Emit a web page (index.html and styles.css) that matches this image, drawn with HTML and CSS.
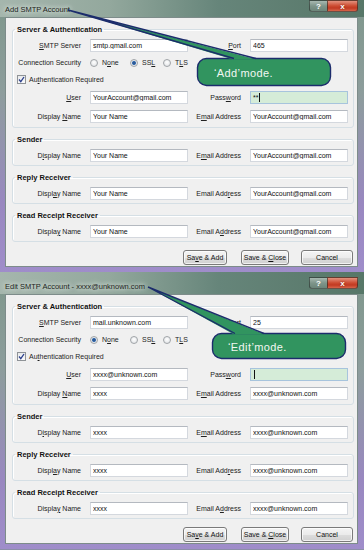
FILE: index.html
```html
<!DOCTYPE html>
<html lang="en">
<head>
  <meta charset="UTF-8">
  <title>SMTP Account</title>
  <link rel="stylesheet" href="styles.css">
</head>
<body>
  <!-- Add mode -->
  <section class="window first">
    <div class="titlebar">
      <span class="title">Add SMTP Account</span>
      <div class="caption">
        <span class="cap-help">?</span>
        <span class="cap-close">x</span>
      </div>
    </div>
    <div class="client">
      <fieldset class="group main">
        <legend>Server &amp; Authentication</legend>
        <div class="row">
          <label class="lbl"><u>S</u>MTP Server</label>
          <input class="txt" value="smtp.gmail.com">
          <label class="lbl lbl-r"><u>P</u>ort</label>
          <input class="txt" value="465">
        </div>
        <div class="row">
          <span class="lbl">Connection Security</span>
          <label class="opt opt-none"><span class="radio"></span><span>N<u>o</u>ne</span></label>
          <label class="opt opt-ssl"><span class="radio on"></span><span>SS<u>L</u></span></label>
          <label class="opt"><span class="radio"></span><span>T<u>L</u>S</span></label>
        </div>
        <div class="row">
          <label class="check-opt"><span class="check"><svg viewBox="0 0 9 9" width="9" height="9"><path d="M2 4.5 L3.8 6.6 L7 2" fill="none" stroke="#2b3f8c" stroke-width="1.3"/></svg></span><span>Au<u>t</u>hentication Required</span></label>
        </div>
        <div class="row tall">
          <label class="lbl"><u>U</u>ser</label>
          <input class="txt" value="YourAccount@gmail.com">
          <label class="lbl lbl-r">Pass<u>w</u>ord</label>
          <span class="txt pw">**<span class="caret"></span></span>
        </div>
        <div class="row tall">
          <label class="lbl">Display <u>N</u>ame</label>
          <input class="txt" value="Your Name">
          <label class="lbl lbl-r">E<u>m</u>ail Address</label>
          <input class="txt" value="YourAccount@gmail.com">
        </div>
      </fieldset>

      <fieldset class="group">
        <legend>Sender</legend>
        <div class="row">
          <label class="lbl">D<u>i</u>splay Name</label>
          <input class="txt" value="Your Name">
          <label class="lbl lbl-r">E<u>m</u>ail Address</label>
          <input class="txt" value="YourAccount@gmail.com">
        </div>
      </fieldset>

      <fieldset class="group">
        <legend>Reply Receiver</legend>
        <div class="row">
          <label class="lbl">Displ<u>a</u>y Name</label>
          <input class="txt" value="Your Name">
          <label class="lbl lbl-r">Email Add<u>r</u>ess</label>
          <input class="txt" value="YourAccount@gmail.com">
        </div>
      </fieldset>

      <fieldset class="group">
        <legend>Read Receipt Receiver</legend>
        <div class="row">
          <label class="lbl">Displa<u>y</u> Name</label>
          <input class="txt" value="Your Name">
          <label class="lbl lbl-r">Email A<u>d</u>dress</label>
          <input class="txt" value="YourAccount@gmail.com">
        </div>
      </fieldset>

      <div class="actions">
        <button class="btn btn-add">Sa<u>v</u>e &amp; Add</button>
        <button class="btn btn-close">Save &amp; <u>C</u>lose</button>
        <button class="btn btn-cancel">Cancel</button>
      </div>
    </div>

    <svg class="callout" width="364" height="277" viewBox="0 0 364 277">
      <rect x="197.5" y="63.5" width="133" height="27" rx="9" fill="#31945f" stroke="#1c2c6c" stroke-width="1.4"/>
      <path d="M68 15 L257 64.5 L233 64.5 Z" fill="#31945f"/>
      <path d="M68 15 L256 63.5 M68 15 L234 63.5" stroke="#1c2c6c" stroke-width="1.4" fill="none"/>
      <text x="214" y="81.5" class="callout-text">‘Add’mode.</text>
    </svg>
  </section>

  <!-- Edit mode -->
  <section class="window second">
    <div class="titlebar">
      <span class="title">Edit SMTP Account - xxxx@unknown.com</span>
      <div class="caption">
        <span class="cap-help">?</span>
        <span class="cap-close">x</span>
      </div>
    </div>
    <div class="client">
      <fieldset class="group main">
        <legend>Server &amp; Authentication</legend>
        <div class="row">
          <label class="lbl"><u>S</u>MTP Server</label>
          <input class="txt" value="mail.unknown.com">
          <label class="lbl lbl-r"><u>P</u>ort</label>
          <input class="txt" value="25">
        </div>
        <div class="row">
          <span class="lbl">Connection Security</span>
          <label class="opt opt-none"><span class="radio on"></span><span>N<u>o</u>ne</span></label>
          <label class="opt opt-ssl"><span class="radio"></span><span>SS<u>L</u></span></label>
          <label class="opt"><span class="radio"></span><span>T<u>L</u>S</span></label>
        </div>
        <div class="row">
          <label class="check-opt"><span class="check"><svg viewBox="0 0 9 9" width="9" height="9"><path d="M2 4.5 L3.8 6.6 L7 2" fill="none" stroke="#2b3f8c" stroke-width="1.3"/></svg></span><span>Au<u>t</u>hentication Required</span></label>
        </div>
        <div class="row tall">
          <label class="lbl"><u>U</u>ser</label>
          <input class="txt" value="xxxx@unknown.com">
          <label class="lbl lbl-r">Pass<u>w</u>ord</label>
          <span class="txt pw"><span class="caret"></span></span>
        </div>
        <div class="row tall">
          <label class="lbl">Display <u>N</u>ame</label>
          <input class="txt" value="xxxx">
          <label class="lbl lbl-r">E<u>m</u>ail Address</label>
          <input class="txt" value="xxxx@unknown.com">
        </div>
      </fieldset>

      <fieldset class="group">
        <legend>Sender</legend>
        <div class="row">
          <label class="lbl">D<u>i</u>splay Name</label>
          <input class="txt" value="xxxx">
          <label class="lbl lbl-r">E<u>m</u>ail Address</label>
          <input class="txt" value="xxxx@unknown.com">
        </div>
      </fieldset>

      <fieldset class="group">
        <legend>Reply Receiver</legend>
        <div class="row">
          <label class="lbl">Displ<u>a</u>y Name</label>
          <input class="txt" value="xxxx">
          <label class="lbl lbl-r">Email Add<u>r</u>ess</label>
          <input class="txt" value="xxxx@unknown.com">
        </div>
      </fieldset>

      <fieldset class="group">
        <legend>Read Receipt Receiver</legend>
        <div class="row">
          <label class="lbl">Displa<u>y</u> Name</label>
          <input class="txt" value="xxxx">
          <label class="lbl lbl-r">Email A<u>d</u>dress</label>
          <input class="txt" value="xxxx@unknown.com">
        </div>
      </fieldset>

      <div class="actions">
        <button class="btn btn-add">Sa<u>v</u>e &amp; Add</button>
        <button class="btn btn-close">Save &amp; <u>C</u>lose</button>
        <button class="btn btn-cancel">Cancel</button>
      </div>
    </div>

    <svg class="callout" width="364" height="277" viewBox="0 0 364 277">
      <rect x="212.5" y="61.5" width="133" height="25" rx="9" fill="#31945f" stroke="#1c2c6c" stroke-width="1.4"/>
      <path d="M148 15 L265 62.5 L234 62.5 Z" fill="#31945f"/>
      <path d="M148 15 L264 61.5 M148 15 L235 61.5" stroke="#1c2c6c" stroke-width="1.4" fill="none"/>
      <text x="228" y="78.5" class="callout-text">‘Edit’mode.</text>
    </svg>
  </section>
</body>
</html>
```

FILE: styles.css
```css
* {
  box-sizing: border-box;
}
body {
  margin: 0;
  width: 364px;
  height: 550px;
  overflow: hidden;
  font-family: "Liberation Sans", Arial, sans-serif;
  font-size: 7px;
  color: #1e1e1e;
  background: #8c8fa8;
}
u {
  text-decoration: underline;
  text-underline-offset: 1px;
}

/* window frame */
.window {
  position: relative;
  height: 277px;
  padding: 0 6px 5px 5px;
  display: flex;
  flex-direction: column;
  background: linear-gradient(to bottom, #7e978b 0%, #8d9d9c 35%, #9988c0 75%, #9f8dca 100%);
}
.window.first {
  margin-top: -5px;
}
.titlebar {
  height: 22px;
  display: flex;
  align-items: flex-start;
  background: linear-gradient(to right, #a5b6ad 0%, #93a89d 30%, #66857a 60%, #577768 100%);
  margin: 0 -6px 0 -5px;
  padding: 0 6px 0 5px;
}
.title {
  font-size: 7.5px;
  line-height: 9px;
  margin-top: 10px;
  color: #1c2420;
  text-shadow: 0 0 4px #e3ebe6, 0 0 6px #e3ebe6;
}
.caption {
  margin-left: auto;
  margin-top: 5px;
  display: flex;
}
.cap-help,
.cap-close {
  height: 12px;
  display: flex;
  align-items: center;
  justify-content: center;
  color: #fff;
  font-weight: bold;
  font-size: 8px;
  border: 1px solid rgba(30, 40, 35, 0.6);
}
.cap-help {
  width: 18px;
  border-right: none;
  border-radius: 0 0 0 3px;
  background: linear-gradient(to bottom, #a7b8b0, #7e958a 50%, #6c8579);
}
.cap-close {
  width: 31px;
  border-radius: 0 0 3px 0;
  background: linear-gradient(to bottom, #e3917d, #cc4a30 50%, #c13a22 70%, #d8644a);
  text-shadow: 0 0 2px #7a1a0a;
}

/* client area */
.client {
  flex: 1;
  background: #f0f0f0;
  border: 1px solid #7d8c8a;
  padding: 7px 3px 0 6px;
}

.group {
  margin: 7px 0 0;
  padding: 2px 5px 1px 0;
  border: 1px solid #d5dfe5;
  border-radius: 3px;
  box-shadow: inset 1px 1px 0 #fff;
  min-width: 0;
}
.group.main {
  margin-top: 0;
  padding-top: 3px;
}
.group legend {
  font-weight: bold;
  font-size: 7.5px;
  line-height: 9px;
  padding: 0 2px;
  margin-left: 2px;
  color: #111;
}

.row {
  display: flex;
  align-items: center;
  height: 18px;
}
.group.main .row {
  height: 17px;
}
.group.main .row.tall {
  height: 19px;
}
.lbl {
  width: 68px;
  flex: none;
  text-align: right;
  white-space: nowrap;
  color: #222;
}
.lbl-r {
  width: auto;
  flex: 1;
}
.txt {
  width: 98px;
  height: 13px;
  margin: 0 0 0 9px;
  padding: 0 2px;
  font-family: "Liberation Sans", Arial, sans-serif;
  font-size: 7px;
  color: #111;
  background: #fff;
  border: 1px solid #d4d8de;
  border-top-color: #b4b9c0;
  outline: none;
  display: flex;
  align-items: center;
}
.pw {
  background: #d5ecd8;
  border-color: #a7c4dd;
}
.caret {
  display: inline-block;
  width: 1px;
  height: 9px;
  background: #111;
  margin-left: 1px;
}

.opt {
  display: flex;
  align-items: center;
  gap: 4px;
}
.opt-none {
  margin-left: 9px;
  width: 40px;
}
.opt-ssl {
  width: 33px;
}
.radio {
  width: 8px;
  height: 8px;
  border-radius: 50%;
  border: 1px solid #a0a4a8;
  background: radial-gradient(circle at 50% 40%, #fff 0, #e6e8ea 70%, #d3d6d9 100%);
}
.radio.on {
  background: radial-gradient(circle, #24467e 0, #3a6fb0 1.6px, #e8eaec 2.4px, #d5d8db 100%);
}

.check-opt {
  display: flex;
  align-items: center;
  gap: 3px;
  margin-left: 4px;
}
.check {
  width: 9px;
  height: 9px;
  border: 1px solid #8f9397;
  background: linear-gradient(to bottom, #e8eaec, #fafafa);
  display: flex;
  align-items: center;
  justify-content: center;
}
.check svg {
  flex: none;
}

/* buttons */
.actions {
  display: flex;
  justify-content: flex-end;
  margin: 8px 1px 0 0;
}
.btn {
  height: 15px;
  padding: 0;
  font-family: "Liberation Sans", Arial, sans-serif;
  font-size: 7px;
  color: #111;
  border: 1px solid #7a7a7a;
  border-radius: 3px;
  background: linear-gradient(to bottom, #f4f4f4 0%, #ebebeb 50%, #dddddd 51%, #d0d0d0 100%);
  box-shadow: inset 0 0 0 1px rgba(255, 255, 255, 0.7);
}
.btn-add {
  width: 44px;
}
.btn-close {
  width: 48px;
  margin-left: 14px;
}
.btn-cancel {
  width: 52px;
  margin-left: 12px;
}

/* annotation bubbles */
.callout {
  position: absolute;
  left: 0;
  top: 0;
  pointer-events: none;
}
.callout-text {
  font-family: "Liberation Sans", Arial, sans-serif;
  font-size: 11px;
  letter-spacing: 0.4px;
  fill: #f2f7f2;
}
```
